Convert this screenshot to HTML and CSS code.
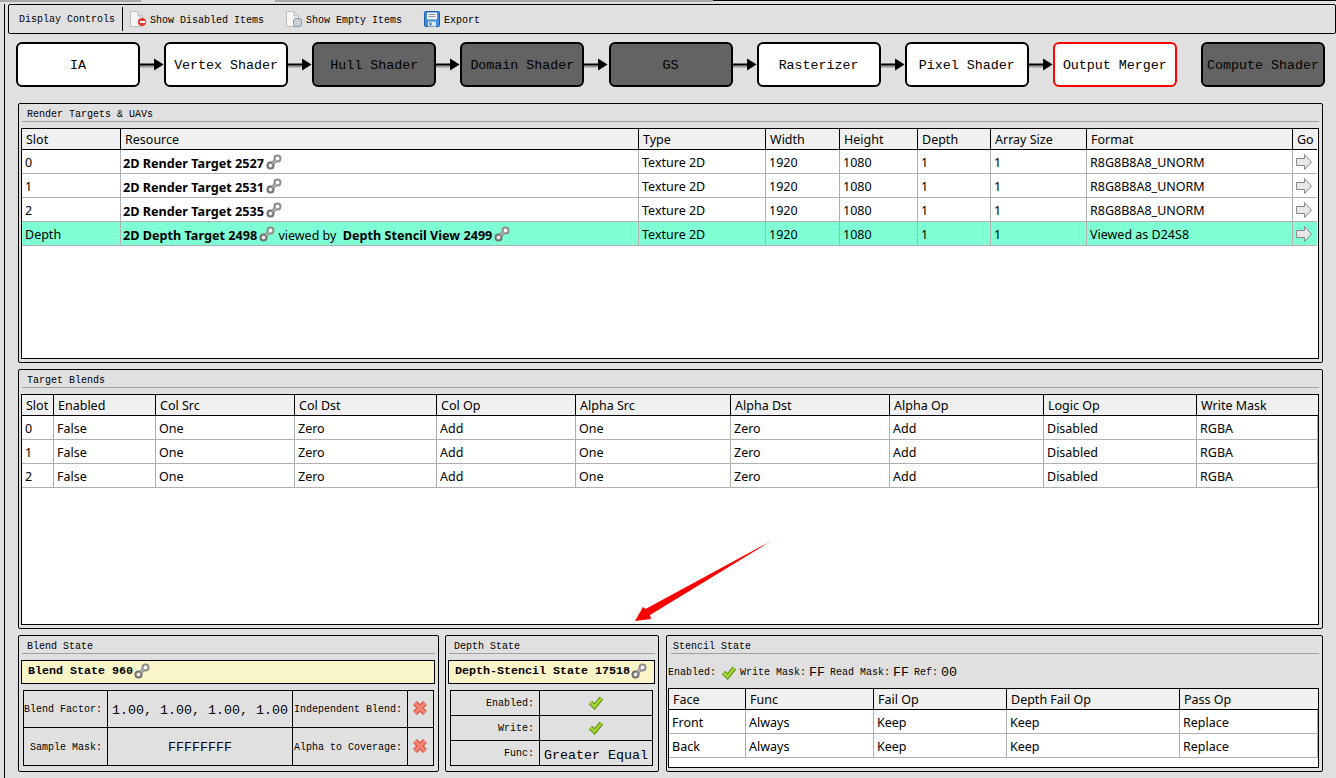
FILE: index.html
```html
<!DOCTYPE html>
<html lang="en">

<head>
    <meta charset="UTF-8">
    <title>Pipeline State</title>
    <link rel="stylesheet" href="styles.css">
</head>

<body>
    <svg class="defs" width="0" height="0">
        <symbol id="i-link" viewBox="0 0 16 16">
            <path d="M5 11 11 5" stroke="#777" stroke-width="3.6" fill="none"/>
            <circle cx="11.5" cy="4.5" r="3" fill="#fff" stroke="#8c8c8c" stroke-width="2"/>
            <circle cx="4.5" cy="11.5" r="3" fill="#eee" stroke="#6f6f6f" stroke-width="2"/>
            <path d="M6.5 9.5 9.5 6.5" stroke="#ccc" stroke-width="1.2"/>
        </symbol>
        <symbol id="i-go" viewBox="0 0 16 16">
            <path d="M.5 4.5H8.5V.5L15.5 8 8.5 15.5V11.5H.5z" fill="#e8e8e8" stroke="#888"/>
        </symbol>
        <symbol id="i-check" viewBox="0 0 16 16">
            <path d="M2.5 8.5 6.5 12.5 13.5 4" fill="none" stroke="#5f8f14" stroke-width="4.6"/>
            <path d="M2.5 8.5 6.5 12.5 13.5 4" fill="none" stroke="#a5d62f" stroke-width="2.6"/>
        </symbol>
        <symbol id="i-cross" viewBox="0 0 16 16">
            <path d="M3 3 13 13M13 3 3 13" fill="none" stroke="#cf4f3c" stroke-width="5.4"/>
            <path d="M3 3 13 13M13 3 3 13" fill="none" stroke="#f6836f" stroke-width="3.4"/>
        </symbol>
        <symbol id="i-page" viewBox="0 0 16 16">
            <path d="M.5 .5H8L12.5 5V15.5H.5z" fill="#f6f6f6" stroke="#bbb"/>
            <path d="M8 .5V5H12.5" fill="#ddd" stroke="#bbb"/>
        </symbol>
        <symbol id="i-save" viewBox="0 0 16 16">
            <rect x=".5" y=".5" width="15" height="15" rx="1" fill="#3d8fdc" stroke="#1f5fa8"/>
            <rect x="3" y="1.5" width="10" height="7" fill="#f2f2f2"/>
            <path d="M4.5 3.5h7M4.5 5.5h7" stroke="#8a9bb0"/>
            <rect x="4" y="10.5" width="8" height="5" fill="#e4e8ee"/>
            <rect x="5.5" y="11.5" width="2" height="3" fill="#3d6fa8"/>
        </symbol>
        <symbol id="wire" viewBox="0 0 24 45">
            <path d="M0 23.5H15" stroke="#999" stroke-width="2" transform="translate(0 1)"/>
            <path d="M0 22.5H15" stroke="#000" stroke-width="2"/>
            <path d="M14 16.5 23.5 22.5 14 28.5z" fill="#000"/>
        </symbol>
    </svg>

    <div class="tabs">
        <div class="tab tab-grey tab-a"></div>
        <div class="tab tab-open"></div>
        <div class="tab tab-grey tab-b"></div>
        <div class="tab tab-line"></div>
    </div>

    <div class="frame">
        <div class="toolbar">
            <span class="toolbar-title">Display Controls</span>
            <button class="tool tool-disabled">
                <span class="tool-icon">
                    <svg class="icon"><use href="#i-page"/></svg>
                    <span class="no-entry"></span>
                </span>
                <span class="tool-label">Show Disabled Items</span>
            </button>
            <button class="tool tool-empty">
                <span class="tool-icon">
                    <svg class="icon"><use href="#i-page"/></svg>
                    <span class="cylinder"></span>
                </span>
                <span class="tool-label">Show Empty Items</span>
            </button>
            <button class="tool">
                <svg class="icon"><use href="#i-save"/></svg>
                <span class="tool-label">Export</span>
            </button>
        </div>

        <div class="pipeline">
            <div class="node">IA</div>
            <svg class="wire"><use href="#wire"/></svg>
            <div class="node">Vertex Shader</div>
            <svg class="wire"><use href="#wire"/></svg>
            <div class="node node-off">Hull Shader</div>
            <svg class="wire"><use href="#wire"/></svg>
            <div class="node node-off">Domain Shader</div>
            <svg class="wire"><use href="#wire"/></svg>
            <div class="node node-off">GS</div>
            <svg class="wire"><use href="#wire"/></svg>
            <div class="node">Rasterizer</div>
            <svg class="wire"><use href="#wire"/></svg>
            <div class="node">Pixel Shader</div>
            <svg class="wire"><use href="#wire"/></svg>
            <div class="node node-current">Output Merger</div>
            <div class="wire"></div>
            <div class="node node-off">Compute Shader</div>
        </div>

        <section class="panel panel-tall">
            <h2 class="panel-title">Render Targets &amp; UAVs</h2>
            <div class="table-wrap">
                <table class="grid targets">
                    <colgroup><col><col><col><col><col><col><col><col><col></colgroup>
                    <thead>
                        <tr><th>Slot</th><th>Resource</th><th>Type</th><th>Width</th><th>Height</th><th>Depth</th><th>Array Size</th><th>Format</th><th>Go</th></tr>
                    </thead>
                    <tbody>
                        <tr>
                            <td>0</td>
                            <td><b>2D Render Target 2527</b><svg class="icon link"><use href="#i-link"/></svg></td>
                            <td>Texture 2D</td><td>1920</td><td>1080</td><td>1</td><td>1</td><td>R8G8B8A8_UNORM</td>
                            <td class="go"><svg class="icon"><use href="#i-go"/></svg></td>
                        </tr>
                        <tr>
                            <td>1</td>
                            <td><b>2D Render Target 2531</b><svg class="icon link"><use href="#i-link"/></svg></td>
                            <td>Texture 2D</td><td>1920</td><td>1080</td><td>1</td><td>1</td><td>R8G8B8A8_UNORM</td>
                            <td class="go"><svg class="icon"><use href="#i-go"/></svg></td>
                        </tr>
                        <tr>
                            <td>2</td>
                            <td><b>2D Render Target 2535</b><svg class="icon link"><use href="#i-link"/></svg></td>
                            <td>Texture 2D</td><td>1920</td><td>1080</td><td>1</td><td>1</td><td>R8G8B8A8_UNORM</td>
                            <td class="go"><svg class="icon"><use href="#i-go"/></svg></td>
                        </tr>
                        <tr class="row-depth">
                            <td>Depth</td>
                            <td><b>2D Depth Target 2498</b><svg class="icon link"><use href="#i-link"/></svg> viewed by <b class="after">Depth Stencil View 2499</b><svg class="icon link"><use href="#i-link"/></svg></td>
                            <td>Texture 2D</td><td>1920</td><td>1080</td><td>1</td><td>1</td><td>Viewed as D24S8</td>
                            <td class="go"><svg class="icon"><use href="#i-go"/></svg></td>
                        </tr>
                    </tbody>
                </table>
            </div>
        </section>

        <section class="panel panel-tall">
            <h2 class="panel-title">Target Blends</h2>
            <div class="table-wrap">
                <table class="grid blends">
                    <colgroup><col><col><col><col><col><col><col><col><col><col></colgroup>
                    <thead>
                        <tr><th>Slot</th><th>Enabled</th><th>Col Src</th><th>Col Dst</th><th>Col Op</th><th>Alpha Src</th><th>Alpha Dst</th><th>Alpha Op</th><th>Logic Op</th><th>Write Mask</th></tr>
                    </thead>
                    <tbody>
                        <tr><td>0</td><td>False</td><td>One</td><td>Zero</td><td>Add</td><td>One</td><td>Zero</td><td>Add</td><td>Disabled</td><td>RGBA</td></tr>
                        <tr><td>1</td><td>False</td><td>One</td><td>Zero</td><td>Add</td><td>One</td><td>Zero</td><td>Add</td><td>Disabled</td><td>RGBA</td></tr>
                        <tr><td>2</td><td>False</td><td>One</td><td>Zero</td><td>Add</td><td>One</td><td>Zero</td><td>Add</td><td>Disabled</td><td>RGBA</td></tr>
                    </tbody>
                </table>
            </div>
        </section>

        <div class="states">
            <section class="panel state-blend">
                <h2 class="panel-title">Blend State</h2>
                <div class="state-name"><b>Blend State 960</b><svg class="icon link"><use href="#i-link"/></svg></div>
                <table class="form form-blend">
                    <colgroup><col><col><col><col></colgroup>
                    <tr>
                        <th>Blend Factor:</th><td class="value">1.00, 1.00, 1.00, 1.00</td>
                        <th>Independent Blend:</th><td class="mark"><svg class="icon"><use href="#i-cross"/></svg></td>
                    </tr>
                    <tr>
                        <th>Sample Mask:</th><td class="value">FFFFFFFF</td>
                        <th>Alpha to Coverage:</th><td class="mark"><svg class="icon"><use href="#i-cross"/></svg></td>
                    </tr>
                </table>
            </section>

            <section class="panel state-depth">
                <h2 class="panel-title">Depth State</h2>
                <div class="state-name"><b>Depth-Stencil State 17518</b><svg class="icon link"><use href="#i-link"/></svg></div>
                <table class="form form-depth">
                    <colgroup><col><col></colgroup>
                    <tr><th>Enabled:</th><td class="mark"><svg class="icon"><use href="#i-check"/></svg></td></tr>
                    <tr><th>Write:</th><td class="mark"><svg class="icon"><use href="#i-check"/></svg></td></tr>
                    <tr><th>Func:</th><td class="value">Greater Equal</td></tr>
                </table>
            </section>

            <section class="panel state-stencil">
                <h2 class="panel-title">Stencil State</h2>
                <div class="stencil-line">
                    <span>Enabled:</span><svg class="icon"><use href="#i-check"/></svg>
                    <span>Write Mask:</span><span class="big">FF</span>
                    <span>Read Mask:</span><span class="big">FF</span>
                    <span>Ref:</span><span class="big">00</span>
                </div>
                <div class="table-wrap">
                    <table class="grid faces">
                        <colgroup><col><col><col><col><col></colgroup>
                        <thead>
                            <tr><th>Face</th><th>Func</th><th>Fail Op</th><th>Depth Fail Op</th><th>Pass Op</th></tr>
                        </thead>
                        <tbody>
                            <tr><td>Front</td><td>Always</td><td>Keep</td><td>Keep</td><td>Replace</td></tr>
                            <tr><td>Back</td><td>Always</td><td>Keep</td><td>Keep</td><td>Replace</td></tr>
                        </tbody>
                    </table>
                </div>
            </section>
        </div>
    </div>

    <!-- red annotation arrow on top of the screenshot -->
    <svg class="annotation" viewBox="0 0 140 84">
        <path d="M137 .5 15 75 16 79 0 81 8 67 10.5 69z" fill="#f00"/>
    </svg>
</body>

</html>
```

FILE: styles.css
```css
/* Reset */
* {
    margin: 0;
    padding: 0;
    box-sizing: border-box;
}

body {
    position: relative;
    width: 1336px;
    height: 778px;
    overflow: hidden;
    font-family: "Noto Sans", sans-serif;
    font-size: 12.5px;
    color: #000;
    background-color: #e0e0e0;
}

.defs {
    position: absolute;
}

.icon {
    display: inline-block;
    width: 16px;
    height: 16px;
    flex: none;
    vertical-align: middle;
}

/* Tab strip cut off by the top edge */
.tabs {
    display: flex;
    height: 4px;
}

.tab {
    height: 2px;
}

.tab-grey {
    background: #a8a8a8;
}

.tab-a {
    width: 141px;
}

.tab-open {
    width: 134px;
}

.tab-b {
    width: 438px;
}

.tab-line {
    flex: 1;
    height: 1px;
    background: #000;
}

.frame {
    height: 774px;
    margin-left: 4px;
    padding-left: 3px;
    border-left: 1px solid #000;
}

/* Toolbar */
.toolbar {
    display: flex;
    align-items: center;
    height: 30px;
    border: 1px solid #000;
    border-radius: 2px;
    font-family: "Liberation Mono", monospace;
    font-size: 10px;
}

.toolbar-title {
    width: 114px;
    height: 24px;
    padding-left: 10px;
    line-height: 26px;
    border-right: 1px solid #000;
}

.tool {
    display: flex;
    align-items: center;
    gap: 4px;
    border: none;
    background: none;
    font: inherit;
    color: inherit;
}

.tool-label {
    padding-top: 2px;
}

.tool-disabled {
    margin-left: 7px;
}

.tool-empty {
    margin-left: 22px;
}

.tool-empty + .tool {
    margin-left: 22px;
}

.tool-icon {
    position: relative;
    display: block;
    width: 16px;
    height: 16px;
}

.no-entry {
    position: absolute;
    right: 0;
    bottom: 1px;
    width: 8px;
    height: 8px;
    border-radius: 50%;
    background: linear-gradient(#fff 0 0) center / 5px 2px no-repeat, #e0392b;
}

.cylinder {
    position: absolute;
    right: 0;
    bottom: 0;
    width: 9px;
    height: 9px;
    border-radius: 3px;
    border: 1px solid #8a9aa8;
    background: #c9d3dc;
}

/* Pipeline */
.pipeline {
    display: flex;
    width: 1309px;
    margin: 8px 0 16px 8px;
}

.node {
    flex: 1;
    display: flex;
    align-items: center;
    justify-content: center;
    height: 45px;
    padding-top: 2px;
    border: 2px solid #000;
    border-radius: 6px;
    background: #fff;
    font-family: "Liberation Mono", monospace;
    font-size: 13.33px;
    white-space: nowrap;
}

.node-off {
    background: #636363;
}

.node-current {
    border-color: #f00;
}

.wire {
    flex: none;
    width: 24.125px;
    height: 45px;
}

/* Panels */
.panel {
    margin: 0 13px 6px 10px;
    padding: 0 3px 3px 2px;
    border: 1px solid #000;
    border-radius: 2px;
    display: flex;
    flex-direction: column;
}

.panel-tall {
    height: 260px;
}

.panel-title {
    height: 18px;
    margin: 0 0 6px 1px;
    padding: 5px 0 0 5px;
    border-bottom: 1px solid #a0a0a0;
    font-family: "Liberation Mono", monospace;
    font-size: 10px;
    font-weight: normal;
    line-height: 12px;
}

.table-wrap {
    flex: 1;
    background: #fff;
    border: 1px solid #000;
}

/* Tables */
.grid {
    table-layout: fixed;
    border-collapse: separate;
    border-spacing: 0;
    width: 100%;
}

.grid th {
    height: 21px;
    padding-left: 4px;
    background: #f0f0f0;
    border-right: 1px solid #000;
    border-bottom: 1px solid #000;
    font-weight: normal;
    text-align: left;
    white-space: nowrap;
}

.grid th:last-child {
    border-right: none;
}

.grid td {
    height: 24px;
    padding: 2px 0 0 3px;
    border-right: 1px solid #b0b0b0;
    border-bottom: 1px solid #b0b0b0;
    white-space: nowrap;
}

.grid td b {
    font-size: 12.65px;
}

.grid td b:first-child {
    margin-left: -1px;
}

.link {
    margin: -4px 0 0 2px;
}

.after {
    margin-left: 3px;
}

.row-depth td {
    background: #7fffd4;
}

.grid td.go {
    padding: 0 0 0 3px;
    border-right: none;
}

.go .icon {
    margin-top: -2px;
}

.targets {
    width: 1295px;
}

.targets col:nth-child(1) { width: 99px; }
.targets col:nth-child(2) { width: 518px; }
.targets col:nth-child(3) { width: 127px; }
.targets col:nth-child(4) { width: 74px; }
.targets col:nth-child(5) { width: 78px; }
.targets col:nth-child(6) { width: 73px; }
.targets col:nth-child(7) { width: 96px; }
.targets col:nth-child(8) { width: 206px; }
.targets col:nth-child(9) { width: 24px; }

.blends {
    width: 1296px;
}

.blends col:nth-child(1) { width: 32px; }
.blends col:nth-child(2) { width: 102px; }
.blends col:nth-child(3) { width: 139px; }
.blends col:nth-child(4) { width: 142px; }
.blends col:nth-child(5) { width: 139px; }
.blends col:nth-child(6) { width: 155px; }
.blends col:nth-child(7) { width: 159px; }
.blends col:nth-child(8) { width: 154px; }
.blends col:nth-child(9) { width: 153px; }
.blends col:nth-child(10) { width: 121px; }

.faces {
    width: 649px;
}

.faces col:nth-child(1) { width: 77px; }
.faces col:nth-child(2) { width: 128px; }
.faces col:nth-child(3) { width: 133px; }
.faces col:nth-child(4) { width: 173px; }
.faces col:nth-child(5) { width: 138px; }

/* Bottom state panels */
.states {
    display: flex;
    gap: 6px;
    height: 137px;
    margin: 0 13px 0 10px;
}

.states .panel {
    margin: 0;
}

.state-blend {
    width: 421px;
}

.state-depth {
    width: 214px;
}

.states .state-stencil {
    width: 657px;
    margin-left: 1px;
    padding-left: 1px;
}

.state-stencil .panel-title {
    margin-left: 3px;
    margin-bottom: 0;
    padding-left: 2px;
}

.state-name {
    display: flex;
    align-items: center;
    height: 24px;
    padding: 0 0 2px 6px;
    border: 1px solid #000;
    background: #faf5c8;
    font-family: "Liberation Mono", monospace;
    font-size: 11.67px;
    white-space: nowrap;
}

.state-name .link {
    margin: 0 0 0 1px;
}

.form {
    table-layout: fixed;
    border-collapse: collapse;
    margin: 6px 0 0 2px;
    font-family: "Liberation Mono", monospace;
    font-size: 10px;
}

.form th,
.form td {
    border: 1px solid #000;
    white-space: nowrap;
}

.form th {
    padding: 1px 5px 0 0;
    font-weight: normal;
    text-align: right;
}

.form .value,
.form .mark {
    text-align: center;
}

.form .value {
    padding-top: 2px;
    font-size: 13.33px;
}

.form .mark .icon {
    margin-top: -2px;
}

.form-blend .mark .icon {
    margin-right: 2px;
}

.form-blend {
    width: 410px;
}

.form-blend tr {
    height: 38px;
}

.form-blend tr:first-child {
    height: 37px;
}

.form-blend col:nth-child(1) { width: 84px; }
.form-blend col:nth-child(2) { width: 185px; }
.form-blend col:nth-child(3) { width: 115px; }
.form-blend col:nth-child(4) { width: 26px; }

.form-depth {
    width: 202px;
}

.form-depth tr {
    height: 25px;
}

.form-depth col:nth-child(1) { width: 89px; }
.form-depth col:nth-child(2) { width: 113px; }

.form-depth .value {
    padding-top: 4px;
}

.stencil-line {
    display: flex;
    align-items: center;
    gap: 3px;
    height: 34px;
    padding-top: 2px;
    font-family: "Liberation Mono", monospace;
    font-size: 10px;
}

.stencil-line .icon {
    margin: 0 0 0 2px;
}

.stencil-line .big {
    margin-right: 2px;
    font-size: 13.33px;
}

.annotation {
    position: absolute;
    left: 635px;
    top: 540px;
    width: 140px;
    height: 84px;
}
```
